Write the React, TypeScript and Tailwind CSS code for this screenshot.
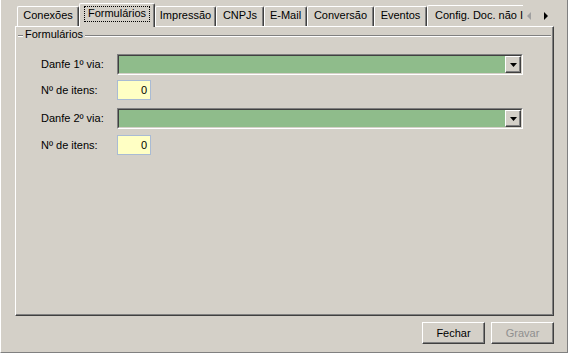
import React from "react";

const FONT = { fontFamily: '"Liberation Sans", Arial, sans-serif' };

function Tab({ label, width }: { label: string; width: number }) {
  return (
    <div
      className="h-[20px] shrink-0 border-l border-t border-r border-l-white border-t-white border-r-[#404040] rounded-t-[2px] shadow-[inset_-1px_0_0_#808080] flex justify-center items-start pt-[2px] text-[11px] leading-[13px] text-black whitespace-nowrap overflow-hidden"
      style={{ width }}
    >
      {label}
    </div>
  );
}

function Combo() {
  return (
    <div className="w-[406px] h-[21px] border-t border-l border-b border-r border-t-[#808080] border-l-[#808080] border-b-white border-r-white flex">
      <div className="flex-1 flex border-t border-l border-b border-r border-t-[#404040] border-l-[#404040] border-b-[#d4d0c8] border-r-[#d4d0c8] bg-[#8fbc8b]">
        <div className="flex-1" />
        <div className="w-[16px] h-full bg-[#d4d0c8] border-t border-l border-b border-r border-t-white border-l-white border-b-[#404040] border-r-[#404040] shadow-[inset_-1px_-1px_0_#808080] flex items-center justify-center">
          <svg width="7" height="4" viewBox="0 0 7 4" className="block">
            <polygon points="0,0 7,0 3.5,4" fill="#000" />
          </svg>
        </div>
      </div>
    </div>
  );
}

function NumInput() {
  return (
    <div className="w-[34px] h-[20px] border border-[#a9bbd4] bg-[#ffffc4] flex items-center justify-end pr-[3px] text-[11px] leading-[13px] text-black">
      0
    </div>
  );
}

function Row({ label, children, mt }: { label: string; children: React.ReactNode; mt: string }) {
  return (
    <div className={`flex items-center ${mt}`}>
      <div className="w-[76px] text-[11px] leading-[13px] text-black whitespace-nowrap">{label}</div>
      {children}
    </div>
  );
}

export default function App() {
  return (
    <div
      className="w-[568px] h-[353px] bg-[#d4d0c8] border-l border-r border-b border-l-white border-r-[#808080] border-b-[#808080] pl-[14px] pt-[4px] flex flex-col overflow-hidden"
      style={FONT}
    >
      {/* Tab strip */}
      <div className="w-[539px] h-[22px] flex items-end shrink-0">
        <div className="w-[2px] shrink-0" />
        <Tab label="Conexões" width={62} />
        <div className="relative z-10 w-[76px] h-[24px] -mb-[1px] shrink-0 bg-[#d4d0c8] border-l border-t border-r border-l-white border-t-white border-r-[#404040] rounded-t-[2px] shadow-[inset_-1px_0_0_#808080] flex justify-center items-start pt-[2px]">
          <span className="border border-dotted border-black px-[3px] pb-[2px] text-[11px] leading-[12px] text-black whitespace-nowrap">
            Formulários
          </span>
        </div>
        <Tab label="Impressão" width={61} />
        <Tab label="CNPJs" width={48} />
        <Tab label="E-Mail" width={43} />
        <Tab label="Conversão" width={67} />
        <Tab label="Eventos" width={53} />
        <div className="w-[96px] h-[21px] shrink-0 border-l border-t border-l-white border-t-white rounded-tl-[2px] flex justify-start items-start pt-[3px] pl-[7px] text-[11px] leading-[13px] text-black whitespace-nowrap overflow-hidden">
          Config. Doc. não Importados
        </div>
        <div className="w-[31px] h-[22px] shrink-0 self-end">
          <svg width="31" height="22" viewBox="0 0 31 22" className="block">
            <polygon points="8,8 8,16 4,12" fill="#a0a0a0" />
            <polygon points="21,8 21,16 25,12" fill="#000" />
          </svg>
        </div>
      </div>

      {/* Tab panel */}
      <div className="w-[539px] h-[290px] shrink-0 border-t border-l border-r border-b border-t-white border-l-white border-r-[#404040] border-b-[#404040] shadow-[inset_-1px_-1px_0_#808080] flex flex-col">
        {/* Group header */}
        <div className="mt-[1px] h-[14px] flex items-start ml-[2px] mr-[2px]">
          <div className="w-[5px] mt-[7px] h-[2px] border-t border-b border-t-[#808080] border-b-white" />
          <div className="px-[2px] text-[11px] leading-[13px] text-black whitespace-nowrap">Formulários</div>
          <div className="flex-1 mt-[7px] h-[2px] border-t border-b border-t-[#808080] border-b-white" />
        </div>

        <div className="flex flex-col pl-[25px]">
          <Row label="Danfe 1º via:" mt="mt-[12px]">
            <Combo />
          </Row>
          <Row label="Nº de itens:" mt="mt-[5px]">
            <NumInput />
          </Row>
          <Row label="Danfe 2º via:" mt="mt-[8px]">
            <Combo />
          </Row>
          <Row label="Nº de itens:" mt="mt-[6px]">
            <NumInput />
          </Row>
        </div>
      </div>

      {/* Buttons */}
      <div className="w-[539px] mt-[6px] flex justify-end gap-[6px]">
        <div className="w-[63px] h-[22px] border-t border-l border-b border-r border-t-white border-l-white border-b-[#404040] border-r-[#404040] shadow-[inset_-1px_-1px_0_#808080] flex items-center justify-center text-[11px] leading-[13px] text-black">
          Fechar
        </div>
        <div className="w-[63px] h-[22px] border-t border-l border-b border-r border-t-white border-l-white border-b-[#404040] border-r-[#404040] shadow-[inset_-1px_-1px_0_#808080] flex items-center justify-center text-[11px] leading-[13px] text-[#8f8f8f]">
          Gravar
        </div>
      </div>
    </div>
  );
}
